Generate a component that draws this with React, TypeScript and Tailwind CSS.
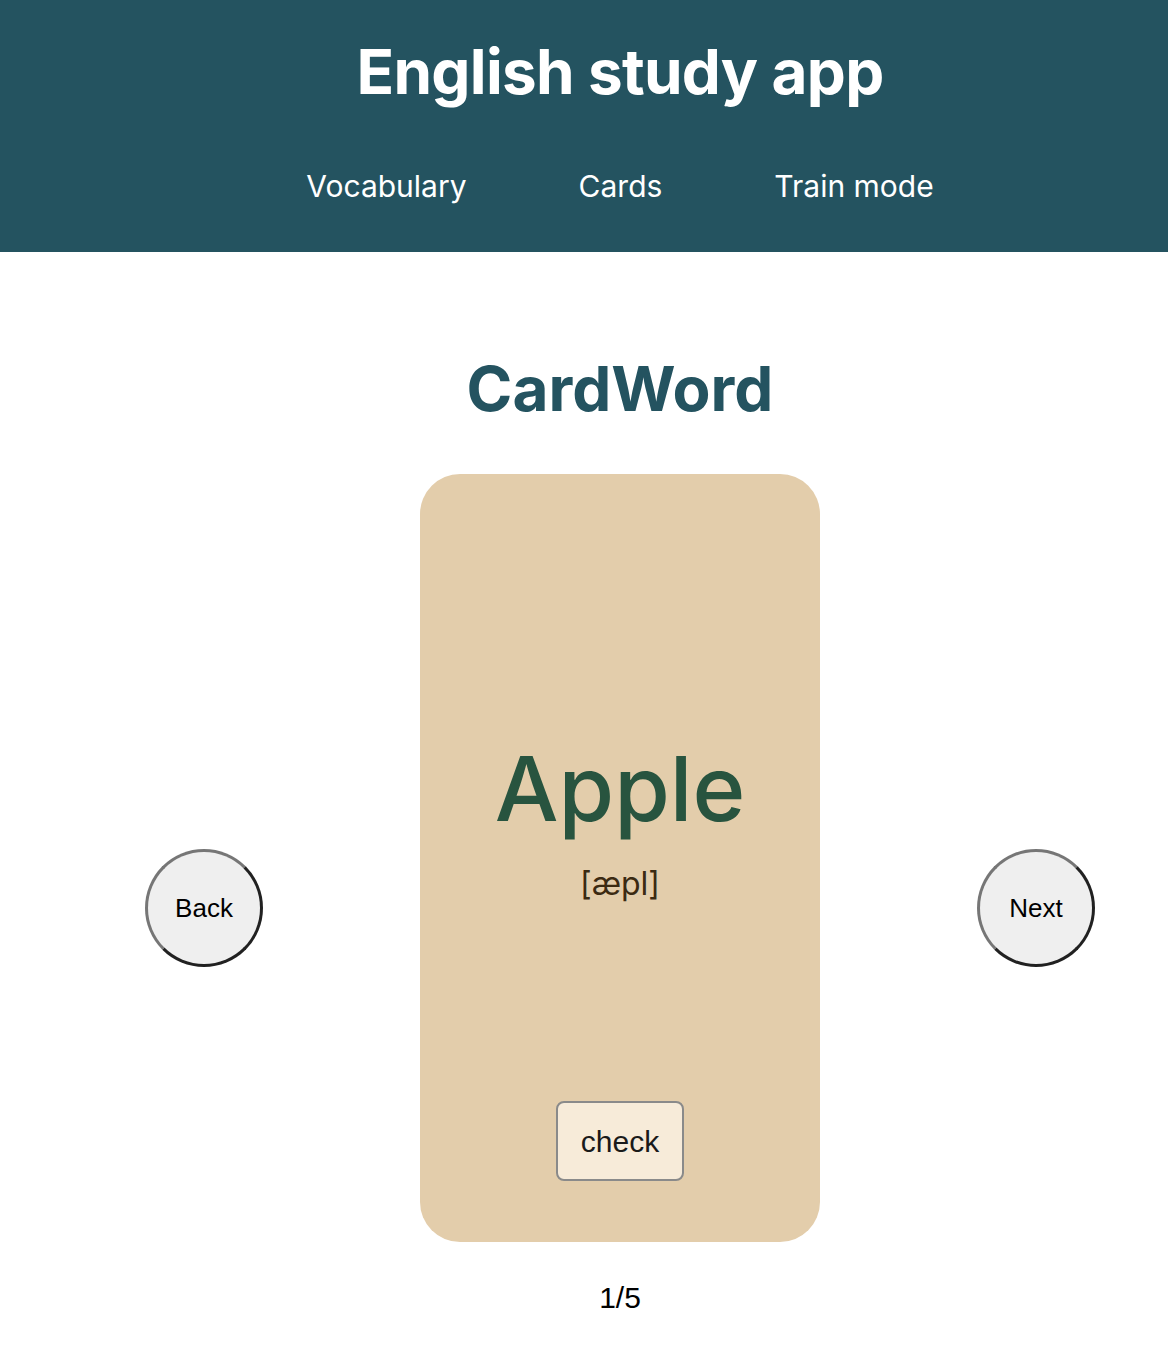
const NAV = ['Vocabulary', 'Cards', 'Train mode'];

function RoundButton({ label }: { label: string }) {
  return (
    <button
      className="h-[118px] w-[118px] rounded-full bg-[#efefef] text-[26px] text-black"
      style={{ border: '3px outset #767676', fontFamily: '"Liberation Sans", Arial, sans-serif' }}
    >
      {label}
    </button>
  );
}

export default function App() {
  return (
    <div className="w-full bg-white" style={{ fontFamily: 'Inter, "Noto Sans", sans-serif' }}>
      <header className="flex h-[252px] flex-col items-center bg-[#245360] pl-[72px] text-white">
        <h1 className="mt-[34px] text-[62px] font-bold leading-[76px] tracking-[-0.7px]">English study app</h1>
        <nav className="mt-[56px] flex gap-[112px] text-[30px] leading-[40px]">
          {NAV.map((item) => (
            <a key={item} href="#" className="text-white">
              {item}
            </a>
          ))}
        </nav>
      </header>

      <main className="flex flex-col items-center pb-10 pl-[72px]">
        <h2 className="mt-[99px] text-[62px] font-bold leading-[76px] text-[#245360]">CardWord</h2>
        <div className="mt-[47px] flex items-center gap-[157px]">
          <div className="pt-[100px]">
            <RoundButton label="Back" />
          </div>
          <div className="flex h-[768px] w-[400px] flex-col items-center rounded-[40px] bg-[#e3cdab]">
            <div className="mt-[262px] text-[90px] font-medium leading-[106px] text-[#28543f]">Apple</div>
            <div className="mt-[22px] text-[32px] leading-[40px] text-[#3b2a12]">[æpl]</div>
            <button
              className="mt-[197px] h-[80px] w-[128px] rounded-[8px] border-2 border-[#8a8a8a] bg-[#f7ebd9] text-[30px] text-[#1a1a1a]"
              style={{ fontFamily: '"Liberation Sans", Arial, sans-serif' }}
            >
              check
            </button>
          </div>
          <div className="pt-[100px]">
            <RoundButton label="Next" />
          </div>
        </div>
        <div
          className="mt-[38px] text-[30px] leading-[36px] text-black"
          style={{ fontFamily: '"Liberation Sans", Arial, sans-serif' }}
        >
          1/5
        </div>
      </main>
    </div>
  );
}
